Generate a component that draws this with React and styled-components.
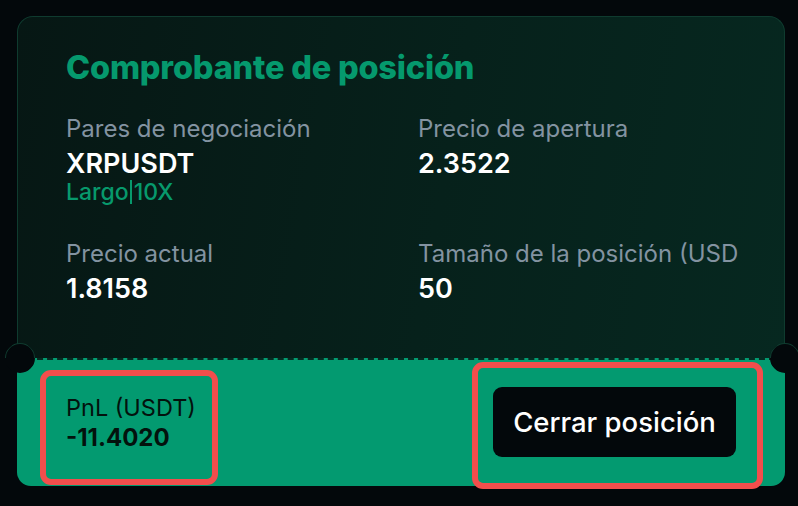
import React from 'react'
import styled, { createGlobalStyle } from 'styled-components'

const GlobalStyle = createGlobalStyle`
  html, body {
    margin: 0;
    padding: 0;
    background: #03080b;
    font-family: Inter, "Noto Sans", sans-serif;
  }
  #root {
    width: 798px;
    height: 506px;
    overflow: hidden;
  }
`

const Card = styled.div`
  position: relative;
  width: 768px;
  height: 470px;
  margin: 16px 0 0 17px;
  display: flex;
  flex-direction: column;
`

const Top = styled.div`
  flex: 1;
  box-sizing: border-box;
  padding: 31px 0 0 48px;
  border: 1px solid #0f3b2f;
  border-bottom: none;
  border-radius: 16px 16px 0 0;
  background: linear-gradient(100deg, #061714 0%, #06211b 55%, #062820 100%);
`

const Title = styled.h1`
  margin: 0;
  font-size: 32.5px;
  line-height: 40px;
  font-weight: 800;
  color: #05996d;
  letter-spacing: -0.2px;
`

const Grid = styled.div`
  display: grid;
  grid-template-columns: 352px 1fr;
  row-gap: 35px;
  margin-top: 26px;
`

const Field = styled.div`
  display: flex;
  flex-direction: column;
`

const Label = styled.span`
  font-size: 24px;
  line-height: 29px;
  color: #8393a1;
  white-space: nowrap;
`

const Value = styled.span`
  margin-top: 4px;
  font-size: 27px;
  line-height: 33px;
  font-weight: 600;
  color: #ffffff;
`

const Side = styled.span`
  display: flex;
  align-items: center;
  font-size: 23px;
  line-height: 24px;
  font-weight: 500;
  color: #07996c;
`

const Bar = styled.i`
  width: 2px;
  height: 24px;
  margin: 0 2px 0 1px;
  background: #07996c;
`

const Notch = styled.span`
  position: absolute;
  top: 327px;
  ${p => (p.side === 'left' ? 'left: -12px;' : 'right: -15px;')}
  width: 30px;
  height: 30px;
  box-sizing: border-box;
  border-radius: 50%;
  background: #03080b;
  border: 1px solid;
  border-color: #0f3b2f #0f3b2f transparent transparent;
  transform: rotate(-45deg);
`

const Footer = styled.div`
  box-sizing: border-box;
  height: 128px;
  display: flex;
  justify-content: space-between;
  align-items: flex-start;
  padding: 0 22px 0 23px;
  background: #039a70;
  border-top: 2px dashed #062a20;
  border-radius: 0 0 14px 14px;
`

const Highlight = styled.div`
  box-sizing: border-box;
  border: 6px solid #f24e4c;
  border-radius: 11px;
  display: flex;
  ${p => p.pad}
`

const PnL = styled.div`
  display: flex;
  flex-direction: column;
`

const PnLLabel = styled.span`
  font-size: 23.5px;
  line-height: 28px;
  color: #03120d;
`

const PnLValue = styled.span`
  margin-top: 2px;
  font-size: 24px;
  line-height: 28px;
  font-weight: 700;
  color: #03120d;
`

const CloseButton = styled.button`
  width: 243px;
  height: 70px;
  border: none;
  border-radius: 9px;
  background: #03080b;
  color: #ffffff;
  font-family: Inter, "Noto Sans", sans-serif;
  font-size: 27.5px;
  font-weight: 500;
  cursor: pointer;
`

export default function App() {
  return (
    <>
      <GlobalStyle />
      <Card>
        <Top>
          <Title>Comprobante de posición</Title>
          <Grid>
            <Field>
              <Label>Pares de negociación</Label>
              <Value>XRPUSDT</Value>
              <Side>Largo<Bar />10X</Side>
            </Field>
            <Field>
              <Label>Precio de apertura</Label>
              <Value>2.3522</Value>
            </Field>
            <Field>
              <Label>Precio actual</Label>
              <Value>1.8158</Value>
            </Field>
            <Field>
              <Label>Tamaño de la posición (USD</Label>
              <Value>50</Value>
            </Field>
          </Grid>
        </Top>
        <Footer>
          <Highlight pad="margin-top: 10px; width: 178px; height: 115px; padding: 18px 0 0 20px;">
            <PnL>
              <PnLLabel>PnL (USDT)</PnLLabel>
              <PnLValue>-11.4020</PnLValue>
            </PnL>
          </Highlight>
          <Highlight pad="margin-top: 2px; width: 291px; height: 127px; padding: 19px 0 0 15px;">
            <CloseButton>Cerrar posición</CloseButton>
          </Highlight>
        </Footer>
        <Notch side="left" />
        <Notch side="right" />
      </Card>
    </>
  )
}
